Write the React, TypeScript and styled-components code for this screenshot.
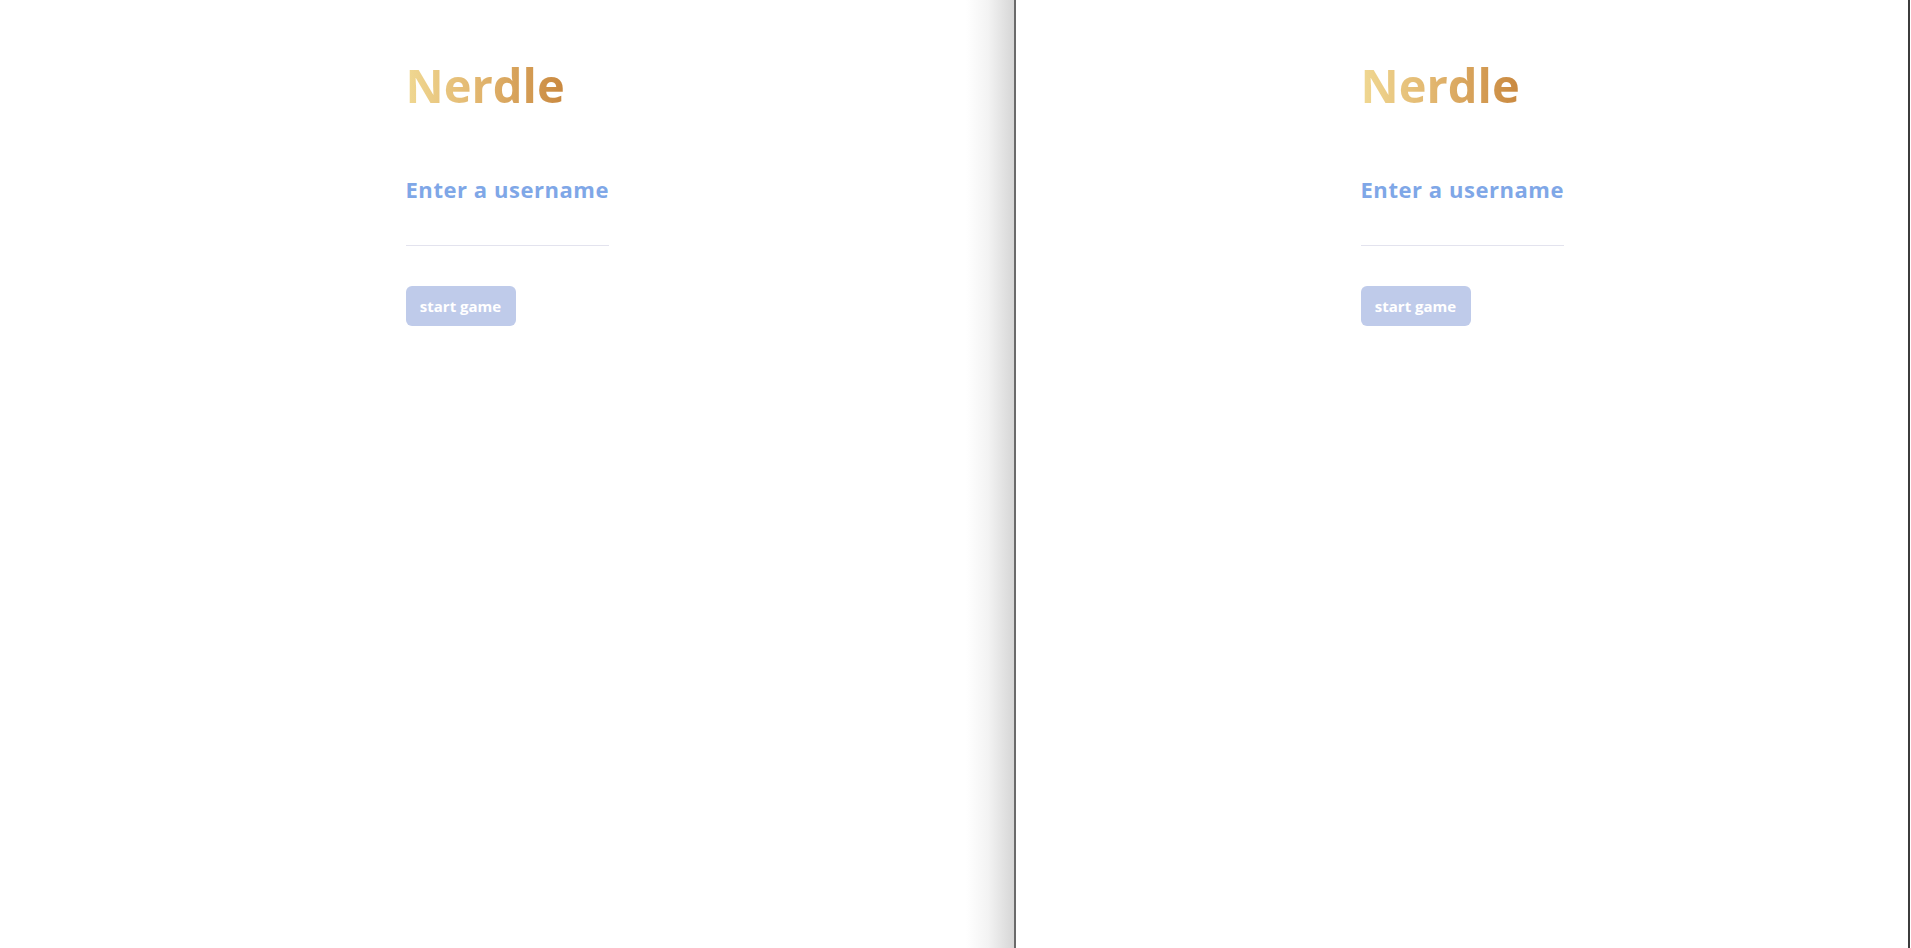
import React from "react";
import styled, { createGlobalStyle } from "styled-components";

const GlobalStyle = createGlobalStyle`
  html, body {
    margin: 0;
    padding: 0;
    background: #ffffff;
    font-family: "Open Sans", "Noto Sans", sans-serif;
  }
  * { box-sizing: border-box; }
`;

const Screen = styled.div`
  display: flex;
  flex-direction: row;
  width: 100%;
  height: 948px;
  overflow: hidden;
  background: #ffffff;
`;

const Pane = styled.div<{ $shade?: boolean; $wide?: boolean }>`
  flex: ${(p) => (p.$wide ? "0 0 1014px" : "1 1 auto")};
  display: flex;
  justify-content: center;
  background: ${(p) =>
    p.$shade
      ? "linear-gradient(to right, #ffffff 0, #ffffff calc(100% - 48px), #f3f3f3 calc(100% - 26px), #d6d6d6 100%)"
      : "#ffffff"};
`;

const Divider = styled.div<{ $color: string; $w: number }>`
  flex: 0 0 ${(p) => p.$w}px;
  background: ${(p) => p.$color};
`;

const Edge = styled.div`
  flex: 0 0 1px;
  background: #ffffff;
`;

const Column = styled.div`
  width: 203px;
  padding-top: 62px;
  display: flex;
  flex-direction: column;
  align-items: flex-start;
`;

const Title = styled.h1`
  margin: 0;
  font-size: 47px;
  line-height: 1;
  font-weight: 700;
  background: linear-gradient(to right, #f0d892 0%, #e2b66f 45%, #c9883f 100%);
  -webkit-background-clip: text;
  background-clip: text;
  color: transparent;
`;

const Label = styled.label`
  margin-top: 69px;
  font-size: 22px;
  line-height: 1;
  font-weight: 700;
  letter-spacing: 0.55px;
  color: #7fa7e7;
  white-space: nowrap;
`;

const Input = styled.input`
  margin-top: 6px;
  width: 100%;
  height: 40px;
  border: none;
  border-bottom: 1px solid #e3e3ee;
  outline: none;
  background: transparent;
  font-family: inherit;
  font-size: 16px;
  padding: 0;
`;

const StartButton = styled.button`
  margin-top: 40px;
  width: 110px;
  height: 40px;
  border: none;
  border-radius: 6px;
  background: #bfcbea;
  color: #ffffff;
  font-family: inherit;
  font-size: 15px;
  font-weight: 700;
  cursor: pointer;
  padding: 0;
`;

const LoginForm: React.FC = () => (
  <Column>
    <Title>Nerdle</Title>
    <Label>Enter a username</Label>
    <Input type="text" />
    <StartButton disabled>start game</StartButton>
  </Column>
);

export default function App() {
  return (
    <>
      <GlobalStyle />
      <Screen>
        <Pane $wide $shade>
          <LoginForm />
        </Pane>
        <Divider $color="#6a6a6a" $w={2} />
        <Pane>
          <LoginForm />
        </Pane>
        <Divider $color="#3c3c3c" $w={2} />
        <Edge />
      </Screen>
    </>
  );
}
